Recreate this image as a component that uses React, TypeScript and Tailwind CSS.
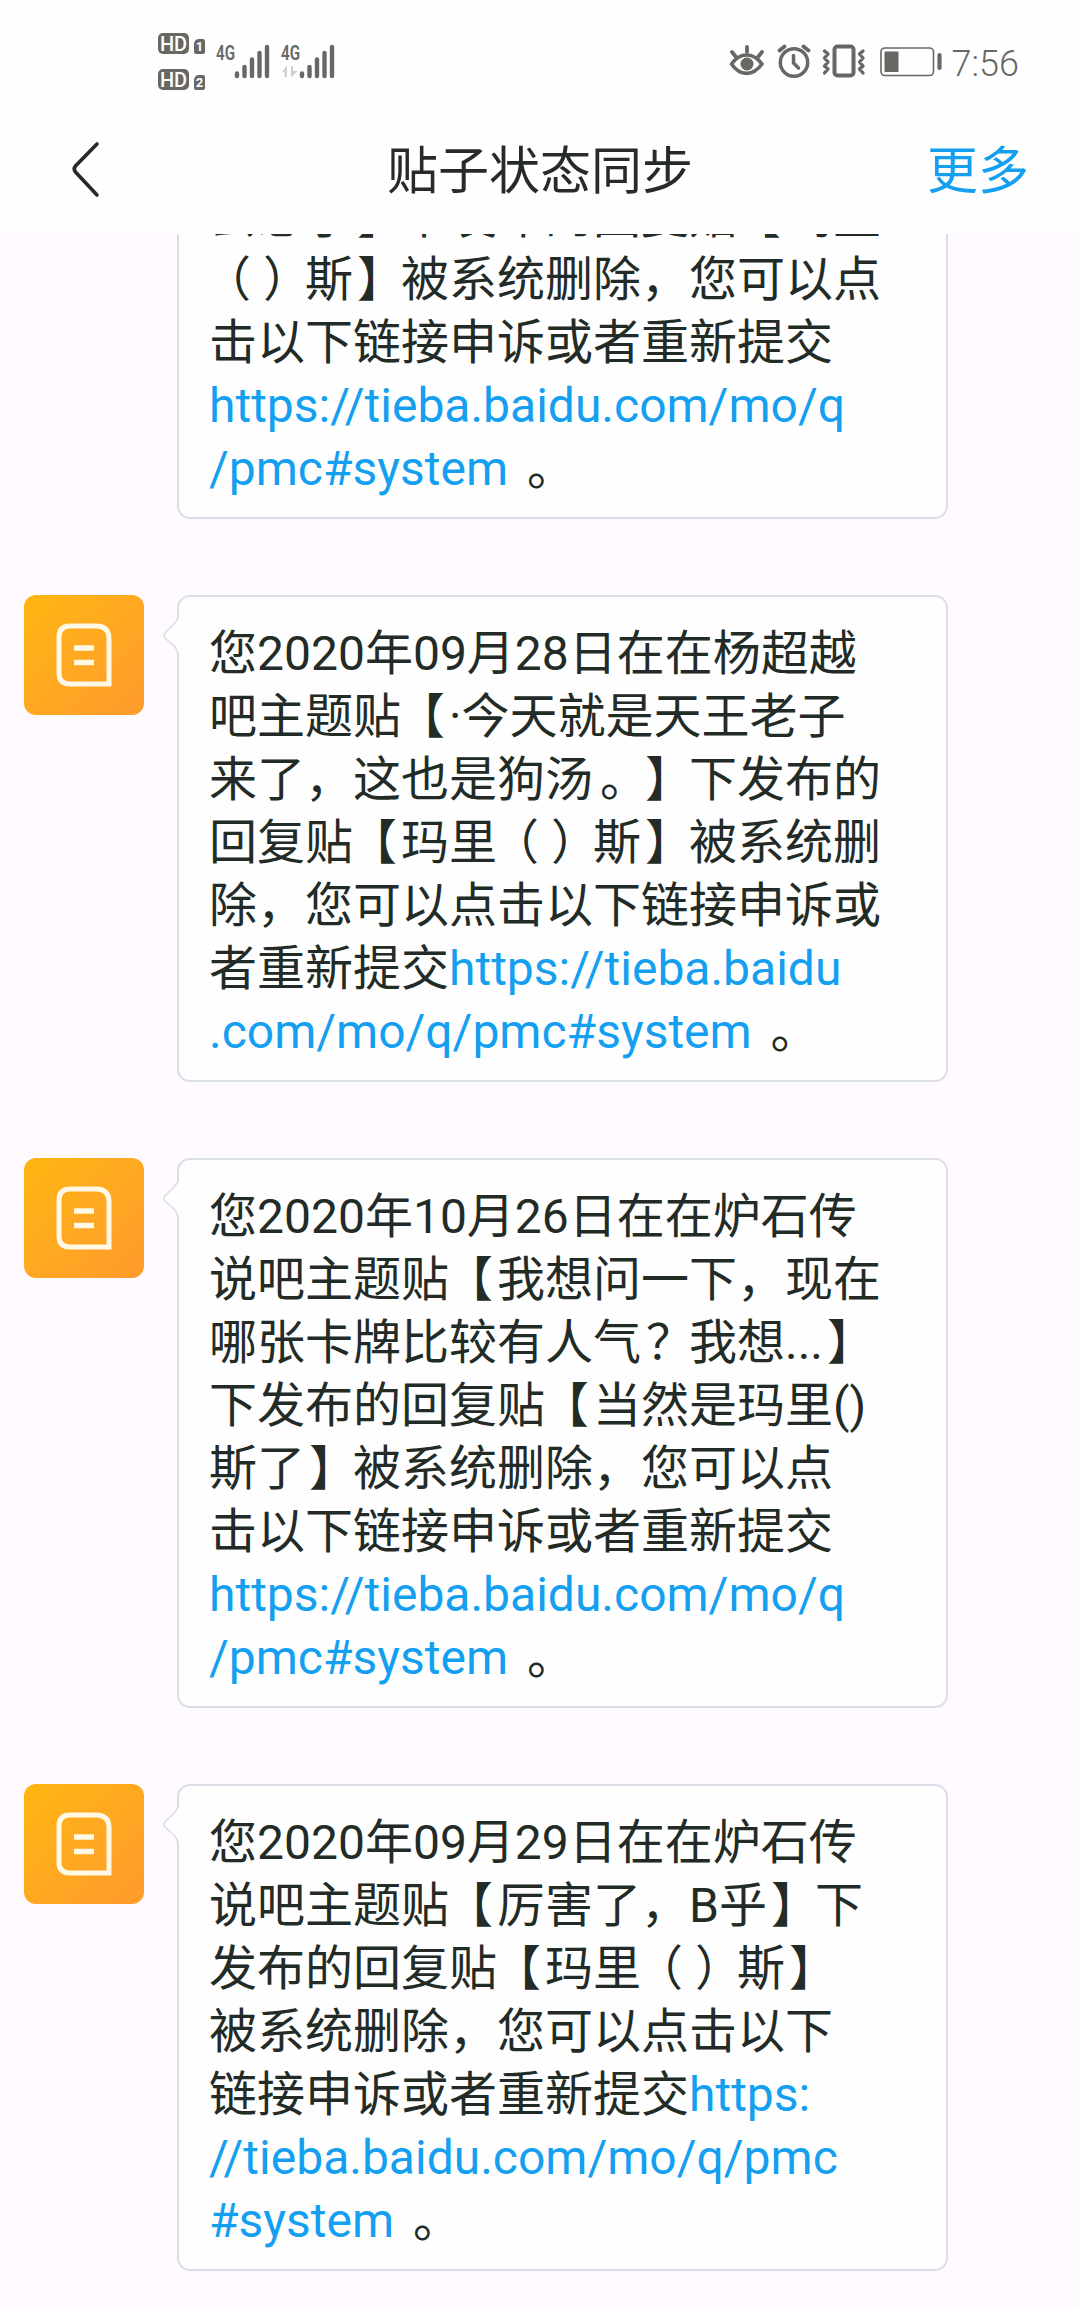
import type { ReactNode } from 'react';

interface Line {
  text?: string;
  link?: string;
  tail?: string;
}

interface Message {
  id: number;
  lines: Line[];
}

const messages: Message[] = [
  {
    id: 1,
    lines: [
      {},
      {},
      { text: '去想了】下发布的回复贴【玛里' },
      { text: '（）斯】被系统删除，您可以点' },
      { text: '击以下链接申诉或者重新提交' },
      { link: 'https://tieba.baidu.com/mo/q' },
      { link: '/pmc#system', tail: ' 。' },
    ],
  },
  {
    id: 2,
    lines: [
      { text: '您2020年09月28日在在杨超越' },
      { text: '吧主题贴【·今天就是天王老子' },
      { text: '来了，这也是狗汤。】下发布的' },
      { text: '回复贴【玛里（）斯】被系统删' },
      { text: '除，您可以点击以下链接申诉或' },
      { text: '者重新提交', link: 'https://tieba.baidu' },
      { link: '.com/mo/q/pmc#system', tail: ' 。' },
    ],
  },
  {
    id: 3,
    lines: [
      { text: '您2020年10月26日在在炉石传' },
      { text: '说吧主题贴【我想问一下，现在' },
      { text: '哪张卡牌比较有人气？我想...】' },
      { text: '下发布的回复贴【当然是玛里()' },
      { text: '斯了】被系统删除，您可以点' },
      { text: '击以下链接申诉或者重新提交' },
      { link: 'https://tieba.baidu.com/mo/q' },
      { link: '/pmc#system', tail: ' 。' },
    ],
  },
  {
    id: 4,
    lines: [
      { text: '您2020年09月29日在在炉石传' },
      { text: '说吧主题贴【厉害了，B乎】下' },
      { text: '发布的回复贴【玛里（）斯】' },
      { text: '被系统删除，您可以点击以下' },
      { text: '链接申诉或者重新提交', link: 'https:' },
      { link: '//tieba.baidu.com/mo/q/pmc' },
      { link: '#system', tail: ' 。' },
    ],
  },
];

// full-width punctuation sits closer to the middle of its cell
const punctuation: Record<string, string> = {
  '（': '-ml-[6px] mr-[6px]',
  '）': 'ml-[6px] -mr-[6px]',
  '【': '-ml-[4px] mr-[4px]',
  '】': 'ml-[4px] -mr-[4px]',
  '。': 'ml-[7px] -mr-[7px]',
  '？': 'ml-[5px] -mr-[5px]',
};

function Glyphs({ text }: { text: string }) {
  return text
    .split(/([（）【】。？])/)
    .filter(Boolean)
    .map((part, i) =>
      punctuation[part] ? (
        <span key={`part_${i + 1}`} className={punctuation[part]}>
          {part}
        </span>
      ) : (
        part
      ),
    );
}

function HdBadge({ sim }: { sim: number }) {
  return (
    <div className="flex h-[22px] items-end gap-[5px]">
      <span className="flex h-[21px] w-[31px] items-center justify-center rounded-[5px] bg-[#666864] text-[20px] leading-none font-medium text-white">
        HD
      </span>
      <span className="flex h-[15px] w-[11px] items-center justify-center rounded-[2px] rounded-tl-[5px] bg-[#666864] text-[13px] leading-none font-bold text-white">
        {sim}
      </span>
    </div>
  );
}

function Signal({ data }: { data?: boolean }) {
  return (
    <svg className="h-[36px] w-[56px] overflow-visible" viewBox="0 0 56 36" fill="none">
      <text
        x="-1"
        y="18"
        fontSize="20"
        fontWeight="600"
        textLength="19"
        lengthAdjust="spacingAndGlyphs"
        fill="#666864"
      >
        4G
      </text>
      <path d="M20 34v-2.500M27.500 34v-9M35 34V17.500M42.500 34V11M50 34V5" stroke="#666864" strokeWidth="4.4" strokeLinecap="round" />
      {data && (
        <path d="M0 30l5-6.500v11.500h-2.500v-5zM9 24h2v5h4.500l-6.500 6.500z" fill="#d0d0d0" />
      )}
    </svg>
  );
}

function StatusIcons() {
  return (
    <svg className="h-[40px] w-[214px]" viewBox="0 0 214 40" fill="none" stroke="#666864" strokeLinecap="round" strokeLinejoin="round">
      {/* eye comfort */}
      <path d="M2.500 20C11 8 24 8 33 20C24 32.500 11 32.500 2.500 20Z" strokeWidth="3.600" />
      <circle cx="18" cy="20" r="6.500" fill="#666864" stroke="none" />
      <path d="M18 3v5M3 8l4 5M33 8l-4 5" strokeWidth="3.800" />
      {/* alarm */}
      <circle cx="65" cy="18.500" r="13.700" strokeWidth="3.500" />
      <path d="M64.500 11.500v7.500l5 5" strokeWidth="3.500" />
      <path d="M50.500 6.500l5-4M79.500 6.500l-5-4" strokeWidth="3.800" />
      {/* vibrate */}
      <rect x="105.500" y="2.500" width="19" height="29" rx="3" strokeWidth="4" />
      <path d="M95.500 7l3.500 3-3.500 4 3.500 4-3.500 4 3.500 3-3.500 4M134 7l-3.500 3 3.500 4-3.500 4 3.500 4-3.500 3 3.500 4" strokeWidth="3.400" />
      {/* battery */}
      <rect x="152" y="4" width="52.500" height="27.500" rx="4" strokeWidth="1.600" />
      <rect x="155.500" y="7.500" width="14" height="20.500" rx="1" fill="#666864" stroke="none" />
      <path d="M210.500 11v13" strokeWidth="4.200" />
    </svg>
  );
}

function StatusBar() {
  return (
    <div className="flex h-[100px] items-start justify-between pr-[61px] pl-[158px] text-[#666864]">
      <div className="flex">
        <div className="mt-[32px] flex flex-col gap-[14px]">
          <HdBadge sim={1} />
          <HdBadge sim={2} />
        </div>
        <div className="mt-[42px] ml-[12px] flex gap-[9px]">
          <Signal />
          <Signal data />
        </div>
      </div>
      <div className="mt-[44px] flex gap-[9px]">
        <StatusIcons />
        <span className="text-[36px] leading-[40px] font-light">7:56</span>
      </div>
    </div>
  );
}

function Header() {
  return (
    <header className="h-[234px] shrink-0 bg-[#fefefe]">
      <StatusBar />
      <div className="flex h-[134px] items-start justify-between pr-[51px] pl-[70px]">
        <div className="w-[83px] pt-[40px]">
          <svg className="h-[58px] w-[32px]" viewBox="0 0 32 58" fill="none" stroke="#262a2b" strokeWidth="3.600" strokeLinecap="round">
            <path d="M27 4L5.500 26Q3 29 5.500 32L27 55" />
          </svg>
        </div>
        <h1 className="mt-[42px] text-[51px] leading-[60px] text-[#262a2b]">贴子状态同步</h1>
        <button type="button" className="mt-[42px] text-[51px] leading-[60px] text-[#149ff0]">
          更多
        </button>
      </div>
    </header>
  );
}

function Avatar() {
  return (
    <div className="flex size-[120px] shrink-0 items-center justify-center rounded-[12px] bg-linear-to-br from-[#ffb60e] to-[#ff9a2c]">
      <svg className="size-[120px]" viewBox="0 0 120 120" fill="none" stroke="#fff8e4" strokeWidth="5">
        <path d="M46 31H72Q85 31 85 44V89H46Q35 89 35 78V42Q35 31 46 31Z" />
        <path d="M50 53H70M50 67.500H70" strokeWidth="5.500" />
      </svg>
    </div>
  );
}

function Bubble({ children }: { children: ReactNode }) {
  return (
    <div className="relative w-[771px] rounded-[13px] border-2 border-[#dcdee6] bg-[#fefefe] px-[30px] pt-[25px] pb-[17px]">
      <svg className="absolute top-[18px] -left-[16px] h-[44px] w-[18px]" viewBox="0 0 18 44" fill="none">
        <path d="M18 0Q15 5 11 9L2 18Q0 21 2 23L11 31Q15 36 18 42Z" fill="#fefefe" />
        <path d="M15 1Q15 5 11 9L2 18Q0 21 2 23L11 31Q15 36 15 41" stroke="#dcdee6" strokeWidth="1.600" />
      </svg>
      {children}
    </div>
  );
}

function MessageRow({ message }: { message: Message }) {
  return (
    <div className="flex items-start gap-[33px] pl-[24px]">
      <Avatar />
      <Bubble>
        {message.lines.map((line, i) => (
          <p key={`line_${i + 1}`} className="h-[63px] text-[48px] leading-[63px] whitespace-pre text-[#232b26]">
            {line.text && <Glyphs text={line.text} />}
            {line.link && <span className="text-[#149ff0]">{line.link}</span>}
            {line.tail && <Glyphs text={line.tail} />}
          </p>
        ))}
      </Bubble>
    </div>
  );
}

export default function App() {
  return (
    <div
      lang="zh-CN"
      className="flex h-[2310px] w-[1080px] flex-col overflow-hidden bg-[#fefaff] font-[Roboto,'Noto_Sans_CJK_SC',sans-serif] [text-spacing-trim:space-all]"
    >
      <Header />
      <main className="min-h-0 flex-1 overflow-hidden">
        <div className="-mt-[202px] flex flex-col gap-[76px]">
          {messages.map((message) => (
            <MessageRow key={message.id} message={message} />
          ))}
        </div>
      </main>
    </div>
  );
}
